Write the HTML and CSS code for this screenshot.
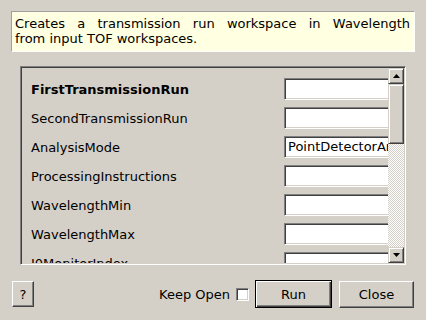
FILE: index.html
```html
<!DOCTYPE html>
<html>
<head>
<meta charset="utf-8">
<link rel="stylesheet" href="styles.css">
</head>
<body>
<div class="dialog">
  <div class="desc">
    <div class="line just">Creates a transmission run workspace in Wavelength</div>
    <div class="line">from input TOF workspaces.</div>
  </div>
  <div class="frame">
    <div class="viewport">
      <div class="props">
        <div class="row"><span class="label bold">FirstTransmissionRun</span><span class="input"></span></div>
        <div class="row"><span class="label">SecondTransmissionRun</span><span class="input"></span></div>
        <div class="row"><span class="label">AnalysisMode</span><span class="input">PointDetectorAnalysis</span></div>
        <div class="row"><span class="label">ProcessingInstructions</span><span class="input"></span></div>
        <div class="row"><span class="label">WavelengthMin</span><span class="input"></span></div>
        <div class="row"><span class="label">WavelengthMax</span><span class="input"></span></div>
        <div class="row"><span class="label">I0MonitorIndex</span><span class="input"></span></div>
      </div>
    </div>
    <div class="scrollbar">
      <div class="sbtn"><svg width="7" height="4" viewBox="0 0 7 4"><path d="M3.5 0 L7 4 L0 4 Z" fill="#000"/></svg></div>
      <div class="thumb"></div>
      <div class="track"></div>
      <div class="sbtn"><svg width="7" height="4" viewBox="0 0 7 4"><path d="M0 0 L7 0 L3.5 4 Z" fill="#000"/></svg></div>
    </div>
  </div>
  <div class="buttons">
    <button class="btn help">?</button>
    <span class="spacer"></span>
    <span class="keep">Keep Open</span>
    <span class="check"></span>
    <button class="btn run">Run</button>
    <button class="btn close">Close</button>
  </div>
</div>
</body>
</html>
```

FILE: styles.css
```css
html, body {
  margin: 0;
  padding: 0;
  background: #d4d0c8;
}
body {
  width: 426px;
  height: 320px;
  overflow: hidden;
  font-family: "DejaVu Sans", sans-serif;
  font-size: 13px;
  color: #000;
}
.dialog {
  display: flex;
  flex-direction: column;
  padding: 11px 11px 0 11px;
}
.desc {
  margin: 0;
  height: 41px;
  box-sizing: border-box;
  background: #ffffe1;
  border-top: 1px solid #a0a0a0;
  border-left: 1px solid #a0a0a0;
  border-right: 1px solid #ffffff;
  border-bottom: 1px solid #ffffff;
  padding: 4px 4px 0 3px;
  line-height: 15px;
}
.line {
  white-space: nowrap;
}
.just {
  text-align: justify;
  text-align-last: justify;
  white-space: normal;
}
.frame {
  margin: 14px 9px 0 9px;
  height: 199px;
  box-sizing: border-box;
  display: flex;
  border-top: 1px solid #808080;
  border-left: 1px solid #808080;
  border-right: 1px solid #ffffff;
  border-bottom: 1px solid #ffffff;
  box-shadow: inset 1px 1px 0 #404040, inset -1px -1px 0 #d4d0c8;
  padding: 1px;
}
.viewport {
  flex: 1;
  overflow: hidden;
  position: relative;
}
.props {
  display: flex;
  flex-direction: column;
  gap: 7px;
  padding: 10px 0 0 9px;
}
.row {
  display: grid;
  grid-template-columns: 253px 120px;
  align-items: center;
  height: 22px;
}
.label {
  white-space: nowrap;
}
.bold {
  font-weight: bold;
}
.input {
  height: 22px;
  box-sizing: border-box;
  background: #fff;
  border-top: 1px solid #808080;
  border-left: 1px solid #808080;
  border-right: 1px solid #ffffff;
  border-bottom: 1px solid #ffffff;
  box-shadow: inset 1px 1px 0 #404040, inset -1px -1px 0 #d4d0c8;
  padding: 0 0 0 3px;
  line-height: 20px;
  white-space: nowrap;
  overflow: hidden;
}
.scrollbar {
  width: 16px;
  display: flex;
  flex-direction: column;
}
.sbtn, .thumb {
  box-sizing: border-box;
  background: #d4d0c8;
  border-top: 1px solid #d4d0c8;
  border-left: 1px solid #d4d0c8;
  border-right: 1px solid #404040;
  border-bottom: 1px solid #404040;
  box-shadow: inset 1px 1px 0 #ffffff, inset -1px -1px 0 #808080;
}
.sbtn {
  height: 16px;
  display: flex;
  align-items: center;
  justify-content: center;
}
.thumb {
  height: 60px;
}
.track {
  flex: 1;
  background: repeating-conic-gradient(#ffffff 0 25%, #d4d0c8 0 50%) 0 0 / 2px 2px;
}
.buttons {
  display: flex;
  align-items: center;
  margin: 15px 1px 0 1px;
  height: 28px;
}
.spacer {
  flex: 1;
}
.btn {
  font-family: "DejaVu Sans", sans-serif;
  font-size: 13px;
  color: #000;
  background: #d4d0c8;
  box-sizing: border-box;
  border-top: 1px solid #ffffff;
  border-left: 1px solid #ffffff;
  border-right: 1px solid #404040;
  border-bottom: 1px solid #404040;
  box-shadow: inset -1px -1px 0 #808080;
  padding: 0;
  margin: 0;
}
.help {
  width: 22px;
  height: 26px;
}
.keep {
  margin-right: 6px;
}
.check {
  width: 13px;
  height: 13px;
  box-sizing: border-box;
  background: #fff;
  border-top: 1px solid #808080;
  border-left: 1px solid #808080;
  border-right: 1px solid #ffffff;
  border-bottom: 1px solid #ffffff;
  box-shadow: inset 1px 1px 0 #404040, inset -1px -1px 0 #d4d0c8;
  margin-right: 6px;
}
.run {
  width: 77px;
  height: 28px;
  outline: none;
  border: 1px solid #000;
  box-shadow: inset 1px 1px 0 #ffffff, inset -1px -1px 0 #404040, inset -2px -2px 0 #808080;
  margin-right: 7px;
}
.close {
  width: 75px;
  height: 27px;
}
```
